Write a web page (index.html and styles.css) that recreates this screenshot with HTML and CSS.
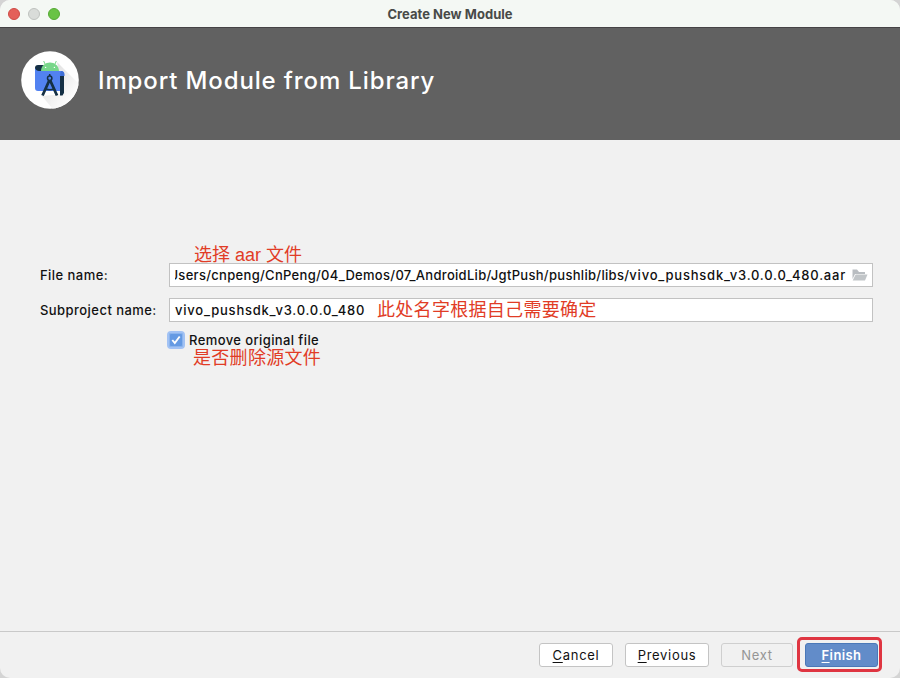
FILE: index.html
```
<!DOCTYPE html>
<html lang="zh-CN">
<head>
<meta charset="utf-8">
<title>Create New Module</title>
<link rel="stylesheet" href="styles.css">
</head>
<body>
<div class="window">
  <div class="titlebar">
    <div class="lights"><i class="light close"></i><i class="light minimize"></i><i class="light maximize"></i></div>
    <span class="window-title">Create New Module</span>
  </div>
  <header class="banner">
    <svg class="logo" width="58" height="58" viewBox="0 0 58 58">
      <defs>
        <linearGradient id="shade" x1="0" y1="0" x2="1" y2="1"><stop offset="0.15" stop-color="#dfdfdf"/><stop offset="0.75" stop-color="#fff"/></linearGradient>
        <clipPath id="disc"><circle cx="29" cy="29" r="28.8"/></clipPath>
      </defs>
      <circle cx="29" cy="29" r="28.8" fill="#fff"/>
      <path d="M36 11L62 37V62H35L21 45L43 43Z" fill="url(#shade)" clip-path="url(#disc)"/>
      <path d="M17 14H23V20H14V17Q14 14 17 14Z" fill="#153045"/>
      <path d="M14 17Q15 20 18 20H40Q43 20 43 23V37Q43 40 40 40H17Q14 40 14 37Z" fill="#5282f1"/>
      <path d="M20 20C20.400 8.500 37.600 8.500 38 20Z" fill="#78d78a"/>
      <path d="M24 13L22.700 10M34 13L35.300 10" stroke="#78d78a" stroke-width="1"/>
      <circle cx="24.600" cy="16.400" r=".7" fill="#fff"/><circle cx="33.400" cy="16.400" r=".7" fill="#fff"/>
      <path d="M39 25H43V42L41.500 44.500H39Z" fill="#153045"/>
      <path d="M40 20Q44 20 43.500 25H39.300V22Z" fill="#3e6fd8"/>
      <path d="M28.500 29L21.500 44.500M29 29L36 44.500" fill="none" stroke="#153045" stroke-width="2.800"/>
      <path d="M25 38Q29 39.500 33 38" fill="none" stroke="#153045" stroke-width="1.600"/>
      <circle cx="28.700" cy="27.200" r="2.200" fill="#5282f1" stroke="#153045" stroke-width="1.500"/><path d="M28.700 23V25" stroke="#153045" stroke-width="1.500"/>
    </svg>
    <h1>Import Module from Library</h1>
  </header>
  <main class="content">
    <div class="note note-file">选择 aar 文件</div>
    <div class="row">
      <label class="label">File name:</label>
      <div class="field path-field">
        <div class="path"><span>/Users/cnpeng/CnPeng/04_Demos/07_AndroidLib/JgtPush/pushlib/libs/<span class="artifact">vivo_pushsdk_v3.0.0.0_480.aar</span></span></div>
        <svg class="folder" width="16" height="12" viewBox="0 0 16 12"><path d="M.5.5H5L7 3H13V5H3L.5 10Z" fill="#b9bdc1"/><path d="M3.600 5.500H15.500L13 11.500H.7Z" fill="#c1c5c8"/></svg>
      </div>
    </div>
    <div class="row">
      <label class="label">Subproject name:</label>
      <div class="field name-field"><span class="value artifact">vivo_pushsdk_v3.0.0.0_480</span><span class="note note-name">此处名字根据自己需要确定</span></div>
    </div>
    <div class="check-row">
      <span class="checkbox"><svg width="12" height="12" viewBox="0 0 12 12"><path d="M2.300 6L4.800 9L9.700 2.500" fill="none" stroke="#fff" stroke-width="1.900"/></svg></span>
      <span class="check-label">Remove original file</span>
    </div>
    <div class="note note-remove">是否删除源文件</div>
  </main>
  <footer class="actions">
    <div class="button cancel"><span><u>C</u>ancel</span></div>
    <div class="button previous"><span><u>P</u>revious</span></div>
    <div class="button next"><span>Next</span></div>
    <div class="highlight"><div class="button finish"><span><u>F</u>inish</span></div></div>
  </footer>
</div>
</body>
</html>
```
FILE: styles.css
```
* { box-sizing: border-box; }
body { margin: 0; background: #d4d4d4; font-family: Inter, "Noto Sans CJK SC", sans-serif; font-size: 13px; color: #111; }
.window { width: 900px; height: 678px; display: flex; flex-direction: column; background: #f1f1f1; border-radius: 10px; overflow: hidden; }
.titlebar { height: 28px; flex: none; display: grid; grid-template-columns: 1fr auto 1fr; align-items: center; background: #f4f8f4; border-bottom: 1px solid #454345; }
.lights { display: flex; gap: 8px; padding-left: 8px; }
.light { width: 12px; height: 12px; border-radius: 50%; border: 1px solid; }
.close { background: #e4605a; border-color: #ce4b46; }
.minimize { background: #d9dcd9; border-color: #bfc2bf; }
.maximize { background: #69c345; border-color: #55aa34; }
.window-title { font-weight: 700; font-size: 13px; line-height: 16px; letter-spacing: .03px; color: #484a48; }
.banner { height: 112px; flex: none; display: flex; align-items: center; padding: 0 0 8px 21px; background: #616161; }
.logo { display: block; }
h1 { margin: 2px 0 0 19px; font-size: 24px; line-height: 30px; font-weight: 500; letter-spacing: .87px; color: #fff; white-space: nowrap; }
.content { flex: 1; padding: 103px 27px 0 40px; }
.note { color: #e13c26; font-family: "Liberation Sans", "Noto Sans CJK SC", sans-serif; font-size: 18px; line-height: 20px; font-weight: 400; letter-spacing: 0; white-space: nowrap; }
.note-file { margin-left: 154px; padding-top: 2px; height: 20px; }
.row { display: flex; align-items: center; height: 24px; margin-bottom: 11px; }
.label { width: 129px; flex: none; font-weight: 500; letter-spacing: .45px; white-space: nowrap; }
.field { flex: 1; min-width: 0; height: 24px; display: flex; align-items: center; background: #fff; border: 1px solid #c2c2c2; padding-left: 5px; font-weight: 500; letter-spacing: .45px; white-space: nowrap; }
.path { flex: 1; min-width: 0; display: flex; justify-content: flex-end; overflow: hidden; }
.artifact { letter-spacing: .78px; }
.path > span { letter-spacing: .3px; }
.path .artifact { letter-spacing: .78px; }
.folder { flex: none; margin: 0 4px 0 6px; }
.value { width: 202px; }
.note-name { letter-spacing: .3px; }
.check-row { display: flex; align-items: center; height: 18px; margin: -2px 0 0 127px; font-weight: 500; }
.checkbox { width: 18px; height: 18px; display: grid; place-items: center; border: 2px solid #a2c2f4; border-radius: 4px; background: #659ae3; box-shadow: inset 0 0 0 1px #8bb4ed; }
.check-label { margin-left: 4px; letter-spacing: .4px; }
.note-remove { margin: -1px 0 0 153px; letter-spacing: .3px; }
.actions { height: 47px; flex: none; display: flex; justify-content: flex-end; align-items: center; border-top: 1px solid #c9c9c9; padding-right: 18px; }
.button { height: 24px; display: flex; align-items: center; justify-content: center; border: 1px solid #c4c4c4; border-radius: 3px; background: #fff; letter-spacing: .7px; }
.button u { text-underline-offset: 2px; text-decoration-thickness: 1px; text-decoration-skip-ink: none; }
.cancel { width: 74px; margin-right: 12px; }
.previous { width: 84px; margin-right: 12px; }
.next { width: 72px; margin-right: 4px; background: #f1f1f1; border-color: #cfcfcf; color: #959595; }
.highlight { width: 85px; height: 35px; margin-top: -1px; padding: 3px 0 0 5px; border: 3px solid #df3541; border-radius: 5px; }
.finish { width: 73px; background: #628cc9; border-color: #4a78b8; color: #fff; font-weight: 600; letter-spacing: .4px; }
```
